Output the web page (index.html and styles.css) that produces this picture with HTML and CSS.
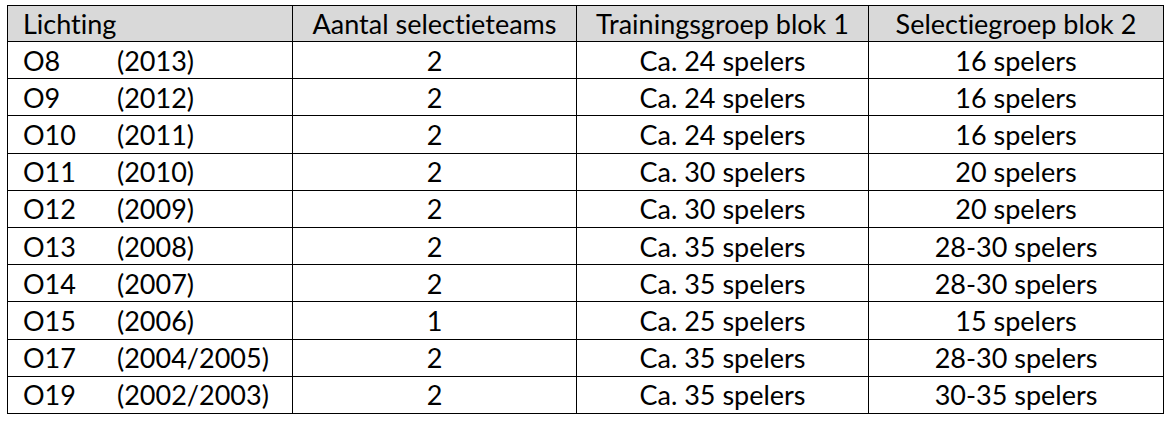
FILE: index.html
```html
<!DOCTYPE html>
<html lang="nl">
<head>
<meta charset="utf-8">
<title>Lichtingen</title>
<link rel="stylesheet" href="styles.css">
</head>
<body>
<table class="grid">
  <colgroup>
    <col class="c1"><col class="c2"><col class="c3"><col class="c4">
  </colgroup>
  <thead>
    <tr class="head">
      <th class="left">Lichting</th>
      <th>Aantal selectieteams</th>
      <th>Trainingsgroep blok 1</th>
      <th>Selectiegroep blok 2</th>
    </tr>
  </thead>
  <tbody>
    <tr><td class="left"><span class="code">O8</span>(2013)</td><td>2</td><td>Ca. 24 spelers</td><td>16 spelers</td></tr>
    <tr><td class="left"><span class="code">O9</span>(2012)</td><td>2</td><td>Ca. 24 spelers</td><td>16 spelers</td></tr>
    <tr><td class="left"><span class="code">O10</span>(2011)</td><td>2</td><td>Ca. 24 spelers</td><td>16 spelers</td></tr>
    <tr><td class="left"><span class="code">O11</span>(2010)</td><td>2</td><td>Ca. 30 spelers</td><td>20 spelers</td></tr>
    <tr><td class="left"><span class="code">O12</span>(2009)</td><td>2</td><td>Ca. 30 spelers</td><td>20 spelers</td></tr>
    <tr><td class="left"><span class="code">O13</span>(2008)</td><td>2</td><td>Ca. 35 spelers</td><td>28-30 spelers</td></tr>
    <tr><td class="left"><span class="code">O14</span>(2007)</td><td>2</td><td>Ca. 35 spelers</td><td>28-30 spelers</td></tr>
    <tr><td class="left"><span class="code">O15</span>(2006)</td><td>1</td><td>Ca. 25 spelers</td><td>15 spelers</td></tr>
    <tr><td class="left"><span class="code">O17</span>(2004/2005)</td><td>2</td><td>Ca. 35 spelers</td><td>28-30 spelers</td></tr>
    <tr><td class="left"><span class="code">O19</span>(2002/2003)</td><td>2</td><td>Ca. 35 spelers</td><td>30-35 spelers</td></tr>
  </tbody>
</table>
</body>
</html>
```
FILE: styles.css
```css
html, body {
  margin: 0;
  padding: 0;
  background: #ffffff;
}
body {
  padding: 5px 0 0 7px;
  font-family: "Lato", "Open Sans", sans-serif;
  font-size: 27px;
  font-variant-ligatures: none;
  font-feature-settings: "liga" 0, "clig" 0;
  color: #000000;
}
.grid {
  border-collapse: collapse;
  table-layout: fixed;
  width: 1156px;
}
.c1 { width: 285px; }
.c2 { width: 284px; }
.c3 { width: 292px; }
.c4 { width: 295px; }
.grid th,
.grid td {
  border: 1px solid #000000;
  padding: 0;
  text-align: center;
  vertical-align: middle;
  font-weight: normal;
  white-space: nowrap;
  line-height: 1;
}
.head {
  height: 36px;
  background: #d9d9d9;
}
tbody tr {
  height: 37.2px;
}
.grid .left {
  text-align: left;
  padding-left: 15px;
}
.code {
  display: inline-block;
  width: 94px;
}
```
